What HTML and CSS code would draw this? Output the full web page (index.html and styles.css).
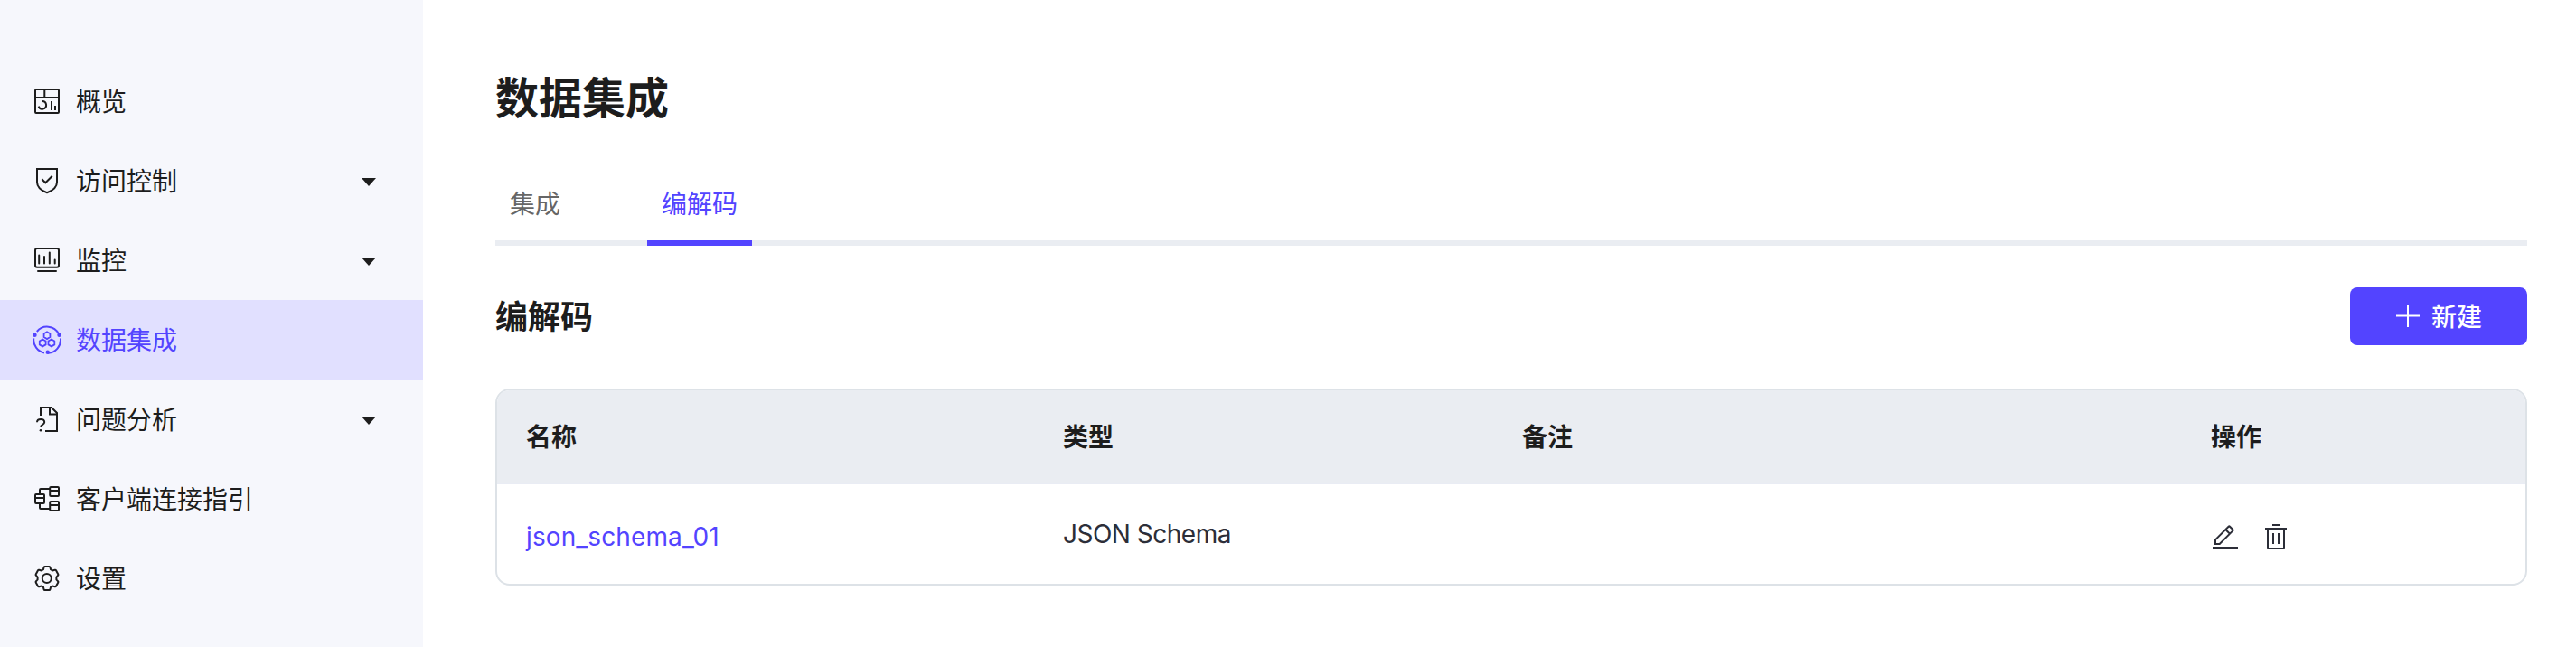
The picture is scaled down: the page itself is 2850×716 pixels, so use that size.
FILE: index.html
```html
<!DOCTYPE html>
<html lang="zh-CN">
<head>
<meta charset="utf-8">
<title>数据集成</title>
<link rel="stylesheet" href="styles.css">
</head>
<body>
<div class="layout">
  <nav class="sidebar">
    <a class="menu-item">
      <svg class="icon" viewBox="0 0 32 32"><rect x="3" y="3" width="26" height="26" rx="1"/><path d="M3 12h26M13.3 3v9M10.800 16a4.300 4.300 0 1 1-4.100 5.600M21 16v10M25 21v5"/></svg>
      <span class="label">概览</span>
    </a>
    <a class="menu-item">
      <svg class="icon" viewBox="0 0 32 32"><path d="M5 3h22v14.500c0 5.500-5 9.500-11 11.700-6-2.200-11-6.200-11-11.700z"/><path d="M10.300 14.300l4 4 7.500-7.500"/></svg>
      <span class="label">访问控制</span><span class="caret"></span>
    </a>
    <a class="menu-item">
      <svg class="icon" viewBox="0 0 32 32"><rect x="3" y="3" width="26" height="20.700" rx="2"/><path stroke-linecap="round" d="M7.200 10.500v9M13 12v7.500M18.800 7.500v12M24.700 15.500v4M6 28h20"/></svg>
      <span class="label">监控</span><span class="caret"></span>
    </a>
    <a class="menu-item active">
      <svg class="icon" viewBox="0 0 32 32"><path d="M4.800 7A14.500 14.500 0 0 1 29 9.500M1.300 14.300A14.800 14.800 0 0 0 13 30.500M30.900 14.300A14.800 14.800 0 0 1 17 30.800"/><circle class="dot" cx="2.400" cy="10.700" r="2.300"/><circle class="dot" cx="29.600" cy="10.700" r="2.300"/><circle class="dot" cx="16.700" cy="29.700" r="2.200"/><path stroke-width="1.800" d="M16 7.200l3.400 2v3.900l-3.400 2-3.400-2V9.200zM11.200 15.500l3.400 2v3.900l-3.400 2-3.400-2v-3.900zM20.900 15.500l3.400 2v3.900l-3.400 2-3.400-2v-3.900z"/></svg>
      <span class="label">数据集成</span>
    </a>
    <a class="menu-item">
      <svg class="icon" viewBox="0 0 32 32"><path d="M9 12V3h12l6 6v20H14M19 3v7.500h8"/><path d="M5 19.200c0-4.300 8.200-4.300 8.200 0 0 2.900-4.200 2.600-4.200 5.800"/><circle class="dot" cx="9" cy="28.300" r="1.300"/></svg>
      <span class="label">问题分析</span><span class="caret"></span>
    </a>
    <a class="menu-item">
      <svg class="icon" viewBox="0 0 32 32"><rect x="19.200" y="3" width="9.800" height="10" rx="1"/><rect x="19.200" y="19" width="9.800" height="10" rx="1"/><rect x="3" y="11" width="10" height="10" rx="1"/><path d="M19 7h10M19 23h10M3 15h10M8 11V6q0-1 1-1h10M8 21v5q0 1 1 1h10"/></svg>
      <span class="label">客户端连接指引</span>
    </a>
    <a class="menu-item">
      <svg class="icon" viewBox="0 0 32 32"><path d="M13.600 3h4.800q.8 0 1 .8l.7 2.500q1 .8 2.100 1.100l2.500-.700q.9-.2 1.300.5l2.300 4.200q.4.700-.2 1.300l-1.700 1.900v2.800l1.700 1.900q.6.600.2 1.300L26 24.800q-.4.700-1.300.5l-2.500-.700q-1.100.3-2.100 1.100l-.7 2.500q-.2.800-1 .8h-4.800q-.8 0-1-.8l-.7-2.500q-1-.8-2.100-1.100l-2.500.700q-.9.200-1.300-.5l-2.300-4.200q-.4-.7.200-1.300l1.700-1.900v-2.800l-1.700-1.900q-.6-.6-.2-1.300L6 7.200q.4-.7 1.300-.5l2.500.7q1.100-.3 2.100-1.100l.7-2.500q.2-.8 1-.8z"/><circle cx="15.800" cy="16" r="5"/></svg>
      <span class="label">设置</span>
    </a>
  </nav>
  <main class="content">
    <h1 class="title">数据集成</h1>
    <div class="tabs"><a class="tab">集成</a><a class="tab selected">编解码</a></div>
    <div class="section-head">
      <h2 class="subtitle">编解码</h2>
      <button class="create"><svg class="plus" viewBox="0 0 28 28"><path d="M1 13.500h26M14 1v25"/></svg><span class="create-text">新建</span></button>
    </div>
    <div class="card">
      <table class="table">
        <colgroup><col class="col-name"><col class="col-type"><col class="col-note"><col></colgroup>
        <thead><tr><th>名称</th><th>类型</th><th>备注</th><th>操作</th></tr></thead>
        <tbody><tr>
          <td><a class="link">json_schema_01</a></td>
          <td class="type">JSON Schema</td>
          <td></td>
          <td><div class="actions">
            <svg class="action" viewBox="0 0 28 28"><path d="M3 22v-4.700L17.600 2.700q.7-.700 1.400 0l3.300 3.300q.7.700 0 1.400L7.700 22zM14.300 6l4.700 4.700M0 26h28"/></svg>
            <svg class="action" viewBox="0 0 28 28"><path d="M10 1h8M2 5h24M5 5v21q0 1 1 1h16q1 0 1-1V5M11 10v12M17 10v12"/></svg>
          </div></td>
        </tr></tbody>
      </table>
    </div>
  </main>
</div>
</body>
</html>
```
FILE: styles.css
```css
* { box-sizing: border-box; }
body {
  margin: 0;
  background: #fff;
  color: #1d1d1d;
  font-family: Inter, "Noto Sans CJK SC", sans-serif;
  font-size: 28px;
  line-height: 40px;
}
svg { display: block; fill: none; stroke: currentColor; stroke-width: 2; }
.layout { display: flex; height: 716px; }
.sidebar {
  flex: none;
  width: 468px;
  padding-top: 68px;
  background: #f6f7fc;
}
.menu-item {
  display: flex;
  align-items: center;
  height: 88px;
  padding: 0 52px 0 36px;
}
.menu-item.active { background: #e1e0ff; color: #5344ff; }
.icon { width: 32px; height: 32px; margin-right: 16px; }
.icon .dot { fill: currentColor; stroke: none; }
.label { flex: 1; padding-top: 2px; }
.caret {
  margin-top: 3px;
  border: solid transparent;
  border-width: 9px 8px 0;
  border-top-color: #1d1d1d;
}
.content { flex: 1; padding: 77px 54px 0 80px; }
.title { margin: 0; font-size: 48px; line-height: 64px; font-weight: 700; }
.tabs {
  display: flex;
  gap: 80px;
  height: 88px;
  margin-top: 43px;
  border-bottom: 6px solid #eaedf2;
}
.tab { height: 88px; padding: 22px 16px 0; color: #666; }
.tab.selected { color: #5344ff; border-bottom: 6px solid #5344ff; }
.section-head {
  display: flex;
  align-items: center;
  justify-content: space-between;
  margin-top: 46px;
}
.subtitle { margin: 0; padding-top: 2px; font-size: 36px; line-height: 48px; font-weight: 700; }
.create {
  display: flex;
  align-items: center;
  justify-content: center;
  gap: 12px;
  width: 196px;
  height: 64px;
  padding: 0;
  border: 0;
  border-radius: 8px;
  background: #5344ff;
  color: #fff;
  font: inherit;
  font-weight: 500;
}
.create-text { padding-top: 1px; }
.plus { width: 28px; height: 28px; }
.card {
  height: 218px;
  margin-top: 48px;
  border: 2px solid #dde2e7;
  border-radius: 16px;
  overflow: hidden;
}
.table { width: 100%; table-layout: fixed; border-collapse: separate; border-spacing: 0; }
.col-name { width: 594px; }
.col-type { width: 508px; }
.col-note { width: 762px; }
.table th, .table td { padding: 0 32px; text-align: left; }
.table th {
  height: 104px;
  padding-top: 2px;
  background: #eaedf2;
  border-bottom: 2px solid #e9ecf4;
  font-weight: 700;
}
.table td { height: 110px; color: #2c2e38; }
.table .type { letter-spacing: -0.5px; }
.table .link { display: block; padding-top: 6px; color: #5344ff; letter-spacing: 0.12px; }
.actions { display: flex; gap: 28px; padding: 6px 0 0 2px; }
.action { width: 28px; height: 28px; }
```
